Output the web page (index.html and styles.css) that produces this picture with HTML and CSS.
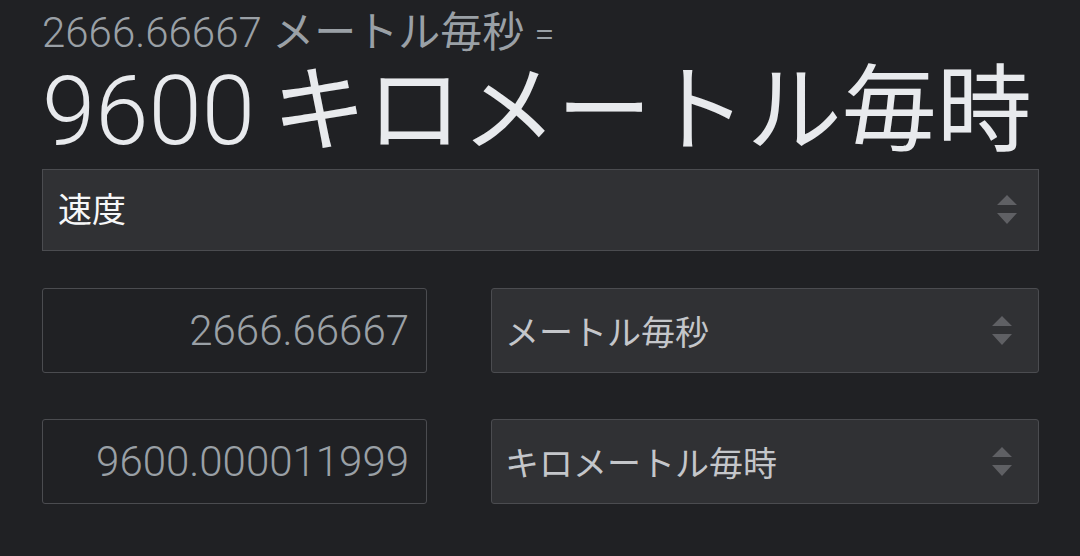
FILE: index.html
```html
<!DOCTYPE html>
<html lang="ja">
<head>
<meta charset="utf-8">
<title>単位換算</title>
<link rel="stylesheet" href="styles.css">
</head>
<body>
<main class="converter">
  <div class="summary"><span class="num">2666.66667</span> <span class="ja">メートル毎秒</span> <span class="eq">=</span></div>
  <div class="result"><span class="num">9600</span> <span class="ja">キロメートル毎時</span></div>

  <div class="select category">
    <span class="label">速度</span>
    <svg class="arrows" viewBox="0 0 20 30" width="20" height="30"><path d="M10 0 L20 10 H0 Z M0 18 H20 L10 29 Z" fill="#5f6064"/></svg>
  </div>

  <div class="rows">
    <div class="field"><span class="value">2666.66667</span></div>
    <div class="select unit">
      <span class="label">メートル毎秒</span>
      <svg class="arrows" viewBox="0 0 20 30" width="20" height="30"><path d="M10 0 L20 10 H0 Z M0 18 H20 L10 29 Z" fill="#5f6064"/></svg>
    </div>
    <div class="field"><span class="value">9600.000011999</span></div>
    <div class="select unit">
      <span class="label">キロメートル毎時</span>
      <svg class="arrows" viewBox="0 0 20 30" width="20" height="30"><path d="M10 0 L20 10 H0 Z M0 18 H20 L10 29 Z" fill="#5f6064"/></svg>
    </div>
  </div>
</main>
</body>
</html>
```

FILE: styles.css
```css
html, body {
  margin: 0;
  padding: 0;
  background: #202124;
}

body {
  font-family: Roboto, "Noto Sans CJK JP", sans-serif;
  color: #e8eaed;
}

.converter {
  padding: 0 41px 0 42px;
}

.num {
  font-weight: 300;
}

.ja {
  font-family: "Noto Sans CJK JP", sans-serif;
  font-weight: 400;
}

.summary {
  color: #9aa0a6;
  font-size: 42px;
  line-height: 48px;
  padding-top: 5px;
  white-space: nowrap;
}

.summary .ja {
  font-size: 42px;
}

.summary .eq {
  font-weight: 300;
  font-size: 36px;
}

.result {
  color: #e8eaed;
  font-size: 96px;
  line-height: 100px;
  margin-top: -6px;
  white-space: nowrap;
}

.result .ja {
  font-size: 95px;
  margin-left: -7px;
}

.select {
  box-sizing: border-box;
  display: flex;
  align-items: center;
  justify-content: space-between;
  background: #303134;
  border: 1px solid #4b4c50;
  font-family: "Noto Sans CJK JP", sans-serif;
}

.select .arrows {
  flex: none;
}

.category {
  height: 82px;
  margin-top: 8px;
  padding: 0 21px 5px 15px;
  font-size: 34px;
  color: #f6f7f8;
}

.category .arrows {
  margin-top: 5px;
}

.rows {
  display: grid;
  grid-template-columns: 385px 1fr;
  grid-auto-rows: 85px;
  column-gap: 64px;
  row-gap: 46px;
  margin-top: 37px;
}

.field {
  box-sizing: border-box;
  display: flex;
  align-items: center;
  justify-content: flex-end;
  border: 1px solid #4b4c50;
  border-radius: 3px;
  padding-right: 17px;
  font-size: 42px;
  font-weight: 300;
  color: #9aa0a6;
}

.unit {
  border-radius: 3px;
  padding: 0 26px 0 13px;
  font-size: 34px;
  color: #c4c6ca;
}
```
